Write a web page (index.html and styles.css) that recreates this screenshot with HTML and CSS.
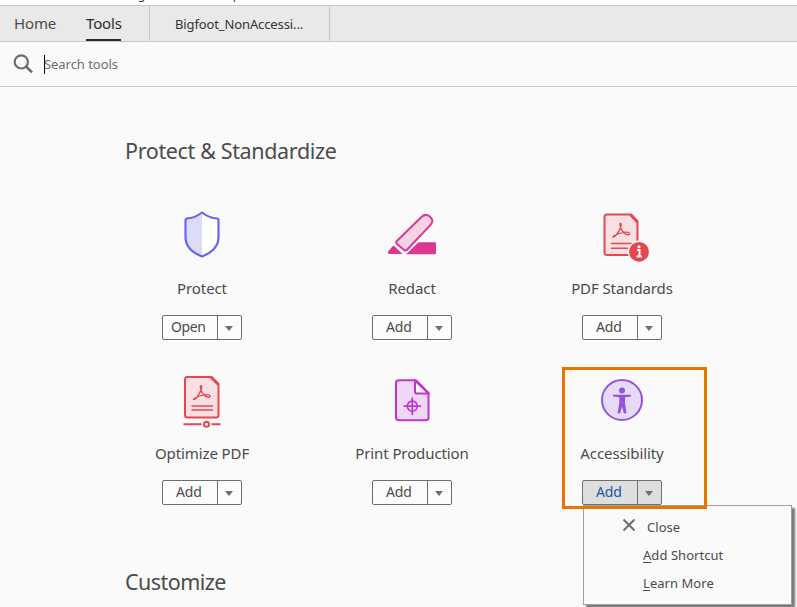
FILE: index.html
```html
<!DOCTYPE html>
<html lang="en">
<head>
<meta charset="utf-8">
<title>Tools</title>
<link rel="stylesheet" href="styles.css">
</head>
<body>
<div class="menubar"><span>File</span><span>Edit</span><span>View</span><span>Sign</span><span>Window</span><span class="help">Help</span></div>
<nav class="tabs">
  <div class="main-tabs"><span class="tab home">Home</span><span class="tab active">Tools</span></div>
  <div class="doc-tab"><span>Bigfoot_NonAccessi...</span></div>
</nav>
<div class="search">
  <svg width="20" height="20" viewBox="0 0 20 20" fill="none" stroke="#6e6e6e"><circle cx="8.300" cy="7.900" r="6.600" stroke-width="2.200"/><path d="M13 12.500 19 18.400" stroke-width="2.700"/></svg>
  <span class="caret"></span><span class="placeholder">Search tools</span>
</div>
<main>
  <h2 class="heading">Protect &amp; Standardize</h2>
  <div class="grid">
    <section class="tool">
      <svg class="icon" width="56" height="56" viewBox="0 0 56 56"><path d="M28 5.500C23.500 9 18 11 11.500 11.500V30C11.500 39.500 19 46 28 49.500Z" fill="#dcdcf9"/><path d="M28 5.500C32.500 9 38 11 44.500 11.500V30C44.500 39.500 37 46 28 49.500Z" fill="#fff"/><path d="M28 5.500C23.500 9 18 11.300 12.800 11.500Q11.500 11.600 11.500 13V30C11.500 39.500 19 46 28 49.500C37 46 44.500 39.500 44.500 30V13Q44.500 11.600 43.200 11.500C38 11.300 32.500 9 28 5.500Z" fill="none" stroke="#6966ee" stroke-width="2.200" stroke-linejoin="round"/></svg>
      <h3>Protect</h3>
      <div class="split"><span class="action open">Open</span><span class="drop"></span></div>
    </section>
    <section class="tool">
      <svg class="icon" width="56" height="56" viewBox="0 0 56 56"><path d="M8.500 39.200Q9.500 38.200 10.500 39.200L18.500 47H5.500Q3.500 47 4 44.800Z" fill="#db3793"/><path d="M22 47.300 34.500 35.200H51Q52 35.200 52 36.200V46.300Q52 47.300 51 47.300Z" fill="#db3793"/><path d="M12.800 34 37.500 10Q41.300 6.200 45.500 9.200L47 10.700Q50 14.200 46.500 17.900L23 42.700Q21.600 44.200 20.100 42.900L12.800 36.700Q11.400 35.400 12.800 34Z" fill="#fafafa" stroke="#fafafa" stroke-width="5"/><path d="M12.800 34 37.500 10Q41.300 6.200 45.500 9.200L47 10.700Q50 14.200 46.500 17.900L23 42.700Q21.600 44.200 20.100 42.900L12.800 36.700Q11.400 35.400 12.800 34Z" fill="#f5d3e5" stroke="#db3793" stroke-width="2"/></svg>
      <h3>Redact</h3>
      <div class="split"><span class="action">Add</span><span class="drop"></span></div>
    </section>
    <section class="tool">
      <svg class="icon" width="56" height="56" viewBox="0 0 56 56"><path d="M13 7.500H36.500L43.500 15V45.500Q43.500 48 41 48H13Q10.500 48 10.500 45.500V10Q10.500 7.500 13 7.500Z" fill="#f7dfe2" stroke="#e34850" stroke-width="2"/><path d="M36.500 7.500 43.500 15" stroke="#e34850" stroke-width="3"/><g id="pdf-mark" fill="none" stroke="#e34850" stroke-width="1.300" stroke-linejoin="round"><path d="M19.500 30C22.500 29 28.500 19 27 16.500C25 14.500 25.500 21.500 30 26C32 28 35.700 28.500 35.700 26.500C35 24 26 25.500 20.500 28.500Q18 30 19.500 30"/></g><path d="M17 36.500H38M17 41.300H34" stroke="#e34850" stroke-width="1.600"/><circle cx="45" cy="44.800" r="11.200" fill="#fafafa"/><circle cx="45" cy="44.800" r="9.900" fill="#e34850"/><path d="M43 43H45.500V49.500M42.500 49.500H48" fill="none" stroke="#fff" stroke-width="2"/><circle cx="45" cy="39.700" r="1.500" fill="#fff"/></svg>
      <h3>PDF Standards</h3>
      <div class="split"><span class="action">Add</span><span class="drop"></span></div>
    </section>
    <section class="tool">
      <svg class="icon" width="56" height="56" viewBox="0 0 56 56"><path d="M13.500 5H37L44.500 12.500V43Q44.500 45.500 42 45.500H13.500Q11 45.500 11 43V7.500Q11 5 13.500 5Z" fill="#f7dfe2" stroke="#e34850" stroke-width="2"/><path d="M37 5 44.500 12.500" stroke="#e34850" stroke-width="3"/><use href="#pdf-mark" x=".5" y="-2.500"/><path d="M17.500 34H39M17.500 38H39" stroke="#e34850" stroke-width="1.700"/><path d="M9.500 52.200H27.500M37.500 52.200H46.500" stroke="#e34850" stroke-width="2"/><circle cx="32.500" cy="52.200" r="2.500" fill="#fafafa" stroke="#e34850" stroke-width="2"/></svg>
      <h3>Optimize PDF</h3>
      <div class="split"><span class="action">Add</span><span class="drop"></span></div>
    </section>
    <section class="tool">
      <svg class="icon" width="56" height="56" viewBox="0 0 56 56" stroke="#c135cb" stroke-width="2" stroke-linejoin="round"><path d="M14.500 8.200H32L44.500 21V45.500Q44.500 48.200 42 48.200H14.500Q12 48.200 12 45.500V10.700Q12 8.200 14.500 8.200Z" fill="#f0d7f5"/><path d="M31 8.500V19.500Q31 21.500 33 21.500H44.500Z" fill="#fafafa"/><circle cx="28.300" cy="34.200" r="5" fill="none" stroke-width="1.700"/><path d="M28.300 25.500V43M19.600 34.200H37" fill="none" stroke-width="1.700"/></svg>
      <h3>Print Production</h3>
      <div class="split"><span class="action">Add</span><span class="drop"></span></div>
    </section>
    <section class="tool selected">
      <svg class="icon" width="56" height="56" viewBox="0 0 56 56"><circle cx="28" cy="28" r="20" fill="#e7daf7" stroke="#9256d9" stroke-width="2"/><circle cx="28" cy="18.500" r="3" fill="#9256d9"/><path d="M19 22.700H37V24.500L31 25.200V31L32.500 41.300H29.800L28 34.500 26.200 41.300H23.500L25.300 31V25.200L19 24.500Z" fill="#9256d9"/></svg>
      <h3>Accessibility</h3>
      <div class="split"><span class="action">Add</span><span class="drop"></span></div>
      <div class="menu">
        <div class="item close"><svg width="14" height="14" viewBox="0 0 14 14"><path d="M1.500 1.500 12.500 12.500M12.500 1.500 1.500 12.500" stroke="#6e6e6e" stroke-width="2"/></svg><span>Close</span></div>
        <div class="item shortcut"><u>A</u>dd Shortcut</div>
        <div class="item learn"><u>L</u>earn More</div>
      </div>
      <div class="highlight"></div>
    </section>
  </div>
  <h2 class="heading customize">Customize</h2>
</main>
</body>
</html>
```
FILE: styles.css
```css
* { box-sizing: border-box; }
body { margin: 0; width: 797px; height: 607px; overflow: hidden; background: #fafafa; color: #4b4b4b; font-family: "Noto Sans", "Open Sans", sans-serif; }
.menubar { height: 5px; overflow: hidden; display: flex; align-items: flex-end; gap: 13px; padding: 0 0 3px 22px; font-size: 12px; line-height: 14px; background: #fff; color: #333; }
.help { margin-left: -10px; }
.tabs { height: 37px; display: flex; background: #e9e9e9; border-top: 1px solid #c8c8c8; border-bottom: 1px solid #c8c8c8; }
.main-tabs { width: 150px; padding-left: 14px; display: flex; gap: 30px; border-right: 1px solid #c8c8c8; font-size: 15px; line-height: 35px; letter-spacing: -.15px; }
.tab { height: 35px; white-space: nowrap; }
.home { width: 42px; }
.active { width: 35px; color: #2c2c2c; border-bottom: 2px solid #2c2c2c; }
.doc-tab { width: 180px; padding-left: 25px; border-right: 1px solid #c8c8c8; font-size: 13px; line-height: 36px; letter-spacing: -.12px; color: #333; }
.search { height: 45px; display: flex; align-items: center; padding-left: 13px; border-bottom: 1px solid #cacaca; }
.caret { width: 1px; height: 19px; margin-left: 11px; background: #000; }
.placeholder { font-size: 13px; letter-spacing: -.05px; margin-left: -1px; color: #6e6e6e; }
main { padding-top: 48px; }
.heading { margin: 0 0 0 125px; font-size: 21.5px; font-weight: 400; line-height: 32px; letter-spacing: -.36px; }
.grid { margin: 40px 0 0 97px; display: grid; grid-template-columns: repeat(3, 210px); grid-template-rows: repeat(2, 165px); }
.tool { position: relative; display: flex; flex-direction: column; align-items: center; }
.icon { display: block; }
.tool h3 { margin: 13px 0 15px; font-size: 15px; line-height: 24px; font-weight: 400; letter-spacing: -.1px; white-space: nowrap; }
.split { width: 80px; height: 25px; display: flex; border: 1px solid #6e6e6e; border-radius: 2px; background: #fcfcfc; }
.action { width: 55px; padding-left: 13px; border-right: 1px solid #6e6e6e; font-size: 14px; line-height: 22px; letter-spacing: -.1px; }
.action.open { padding-left: 8px; letter-spacing: -.4px; }
.drop { flex: 1; display: flex; align-items: center; justify-content: center; }
.drop::before { content: ""; border: 4px solid transparent; border-top: 5px solid #6e6e6e; border-bottom: 0; margin: 1px 2px 0 0; }
.selected .split { background: #dedede; }
.selected .action { color: #1557a5; }
.menu { position: absolute; left: 66px; top: 133px; width: 209px; height: 100px; padding-top: 8px; background: #fafafa; border: 1px solid #a0a0a0; box-shadow: 3px 3px 2px #777; font-size: 13px; letter-spacing: .05px; }
.item { height: 28px; line-height: 27px; padding-left: 59px; white-space: nowrap; }
.item u { text-underline-offset: 2px; }
.close { display: flex; padding-left: 38px; }
.close svg { margin-top: 4px; }
.close span { margin-left: 11px; }
.highlight { position: absolute; left: 45px; top: -5px; width: 145px; height: 142px; border: 3px solid #e87500; }
.customize { margin-top: 29px; letter-spacing: -.55px; }
```
